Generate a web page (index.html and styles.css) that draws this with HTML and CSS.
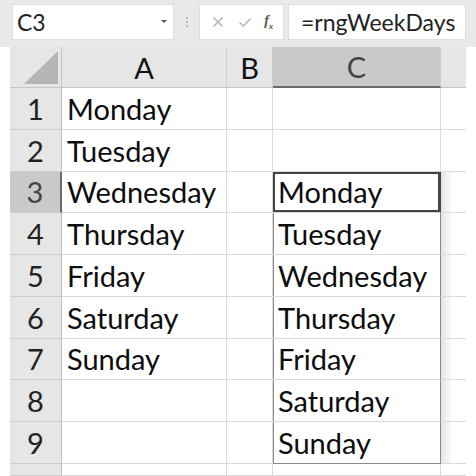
FILE: index.html
```html
<!DOCTYPE html>
<html>
<head>
<meta charset="utf-8">
<link rel="stylesheet" href="styles.css">
</head>
<body>
<div class="toolbar">
  <div class="namebox"><span class="nb-text">C3</span><span class="nb-arrow"></span></div>
  <div class="grip"><span></span><span></span><span></span></div>
  <div class="buttons">
    <svg width="16" height="16" viewBox="0 0 16 16"><path d="M3.5 3.5L12.5 12.5M12.5 3.5L3.5 12.5" stroke="#b4b4b4" stroke-width="1.5" fill="none"/></svg>
    <svg width="16" height="16" viewBox="0 0 16 16"><path d="M2.5 8.5L6.5 12L13.5 4.5" stroke="#b4b4b4" stroke-width="1.5" fill="none"/></svg>
    <span class="fx">f<sub>x</sub></span>
  </div>
  <div class="formula">=rngWeekDays</div>
</div>
<div class="sheet">
  <div class="corner"><div class="tri"></div></div>
  <div class="colh">A</div>
  <div class="colh">B</div>
  <div class="colh sel">C</div>
  <div class="colh last"></div>

  <div class="rowh">1</div><div class="cell">Monday</div><div class="cell"></div><div class="cell"></div><div class="cell last"></div>
  <div class="rowh">2</div><div class="cell">Tuesday</div><div class="cell"></div><div class="cell"></div><div class="cell last"></div>
  <div class="rowh sel">3</div><div class="cell">Wednesday</div><div class="cell"></div><div class="cell rng act">Monday</div><div class="cell last shade"></div>
  <div class="rowh">4</div><div class="cell">Thursday</div><div class="cell"></div><div class="cell rng">Tuesday</div><div class="cell last shade"></div>
  <div class="rowh">5</div><div class="cell">Friday</div><div class="cell"></div><div class="cell rng">Wednesday</div><div class="cell last shade"></div>
  <div class="rowh">6</div><div class="cell">Saturday</div><div class="cell"></div><div class="cell rng">Thursday</div><div class="cell last shade"></div>
  <div class="rowh">7</div><div class="cell">Sunday</div><div class="cell"></div><div class="cell rng">Friday</div><div class="cell last shade"></div>
  <div class="rowh">8</div><div class="cell"></div><div class="cell"></div><div class="cell rng">Saturday</div><div class="cell last shade"></div>
  <div class="rowh">9</div><div class="cell"></div><div class="cell"></div><div class="cell rng end">Sunday</div><div class="cell last shade"></div>
  <div class="rowh"></div><div class="cell"></div><div class="cell"></div><div class="cell"></div><div class="cell last"></div>
</div>
</body>
</html>
```
FILE: styles.css
```css
html, body {
  margin: 0;
  padding: 0;
  background: #ffffff;
  width: 476px;
  height: 476px;
  overflow: hidden;
}
body {
  font-family: Lato, "Open Sans", sans-serif;
  color: #111;
}
.toolbar {
  height: 47px;
  background: #e9e9e9;
  display: flex;
  align-items: flex-start;
  padding-top: 4px;
  box-sizing: border-box;
}
.namebox {
  margin-left: 12px;
  width: 162px;
  height: 36px;
  background: #fff;
  box-sizing: border-box;
  border: 1px solid #dedede;
  display: flex;
  align-items: center;
  justify-content: space-between;
  padding: 0 6px 0 4px;
}
.nb-text {
  font-size: 23px;
  color: #222;
}
.nb-arrow {
  width: 0;
  height: 0;
  border-left: 3px solid transparent;
  border-right: 3px solid transparent;
  border-top: 3px solid #555;
  margin-bottom: 2px;
}
.grip {
  width: 25px;
  height: 36px;
  display: flex;
  flex-direction: column;
  align-items: center;
  justify-content: center;
  gap: 2px;
}
.grip span {
  width: 2px;
  height: 2px;
  background: #b8b8b8;
}
.buttons {
  width: 85px;
  height: 36px;
  background: #fff;
  box-sizing: border-box;
  border: 1px solid #dedede;
  display: flex;
  align-items: center;
  justify-content: space-around;
  padding: 0 4px;
}
.fx {
  font-family: "Liberation Serif", serif;
  font-style: italic;
  font-weight: bold;
  font-size: 14px;
  color: #555;
}
.fx sub {
  font-size: 9px;
}
.formula {
  margin-left: 4px;
  width: 178px;
  height: 36px;
  background: #fff;
  box-sizing: border-box;
  border: 1px solid #dedede;
  font-size: 23px;
  color: #222;
  padding-left: 12px;
  line-height: 34px;
  white-space: nowrap;
  overflow: hidden;
}
.sheet {
  margin-left: 10px;
  display: grid;
  grid-template-columns: 52px 165px 46px 168px 25px;
  grid-template-rows: 41px repeat(9, 41.75px) 12px;
  background: #fff;
}
.corner {
  background: #e6e6e6;
  border-right: 1px solid #c6c6c6;
  border-bottom: 1px solid #c6c6c6;
  position: relative;
}
.tri {
  position: absolute;
  right: 3px;
  bottom: 3px;
  width: 0;
  height: 0;
  border-left: 34px solid transparent;
  border-bottom: 33px solid #b5b5b5;
}
.colh {
  background: #e6e6e6;
  border-right: 1px solid #cdcdcd;
  border-bottom: 1px solid #c6c6c6;
  display: flex;
  align-items: center;
  justify-content: center;
  font-size: 29px;
  color: #111;
}
.colh.sel {
  background: #c9c9c9;
  border-bottom: 2px solid #6a6a6a;
  color: #444;
}
.colh.last {
  border-right: none;
}
.rowh {
  background: #e6e6e6;
  border-right: 1px solid #c0c0c0;
  border-bottom: 1px solid #cecece;
  display: flex;
  align-items: center;
  justify-content: center;
  font-size: 29px;
  color: #222;
}
.rowh.sel {
  background: #c9c9c9;
  border-right: 2px solid #6a6a6a;
  color: #444;
}
.cell {
  border-right: 1px solid #dadada;
  border-bottom: 1px solid #dadada;
  display: flex;
  align-items: center;
  padding-left: 5px;
  font-size: 29px;
  color: #0d0d0d;
  white-space: nowrap;
  overflow: hidden;
}
.cell.last {
  border-right: none;
}
.cell.rng {
  border-right-color: #8a8a8a;
  box-shadow: inset 1px 0 0 #8a8a8a;
}
.cell.rng.end {
  border-bottom-color: #8a8a8a;
}
.cell.rng.act {
  box-shadow: inset 0 0 0 2px #444;
  border-right-color: #444;
}
.cell.shade {
  background: linear-gradient(to right, rgba(0,0,0,0.10), rgba(0,0,0,0) 12px);
}
```
